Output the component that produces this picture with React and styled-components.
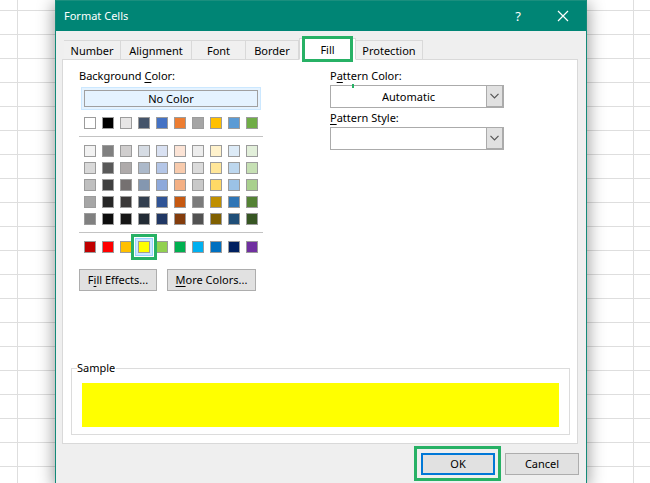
import React, { useState } from 'react';
import styled, { createGlobalStyle } from 'styled-components';

const GlobalStyle = createGlobalStyle`
  * {
    box-sizing: border-box;
  }
  body {
    margin: 0;
    overflow: hidden;
    font-family: 'Noto Sans', 'Open Sans', sans-serif;
    font-size: 11px;
    line-height: 16px;
    color: #000;
  }
  button, select {
    font: inherit;
    color: inherit;
    border-radius: 0;
    margin: 0;
    padding: 0;
  }
  u {
    text-underline-offset: 2px;
  }
`;

const Sheet = styled.main`
  min-height: 100vh;
  padding: 0 63px 0 55px;
  background-color: #fff;
  background-image:
    linear-gradient(#dedede 1px, transparent 1px),
    linear-gradient(90deg, #dedede 1px, transparent 1px);
  background-size: 77px 24px;
  background-position: 17px 10px;
`;

const Dialog = styled.section`
  min-height: 100vh;
  border: solid #138a78;
  border-width: 0 1px;
  background: #efefef;
  box-shadow: 0 4px 16px 1px rgba(0, 0, 0, 0.4);
`;

const TitleBar = styled.header`
  display: flex;
  align-items: center;
  height: 31px;
  padding: 0 17px 0 8px;
  border-top: 1px solid #1a8f7e;
  background: #008575;
  color: #fff;
`;

const Title = styled.h1`
  flex: 1;
  margin: 0;
  font-size: 11px;
  font-weight: 400;
`;

const TitleButton = styled.button`
  display: flex;
  align-items: center;
  justify-content: center;
  width: 12px;
  height: 20px;
  margin-left: 33px;
  border: 0;
  background: none;
  font-size: 13px;
`;

const Tabs = styled.div`
  display: flex;
  align-items: flex-end;
  height: 29px;
  padding-left: 8px;
`;

const Tab = styled.button`
  position: relative;
  width: ${(props) => props.$width}px;
  height: ${(props) => (props.$active ? 22 : 20)}px;
  padding-top: 1px;
  border: 1px solid #d9d9d9;
  border-left-width: ${(props) => (props.$active ? 1 : 0)}px;
  border-bottom-color: ${(props) => (props.$active ? '#fff' : '#d9d9d9')};
  background: ${(props) => (props.$active ? '#fff' : '#f0f0f0')};

  &::after {
    content: '';
    display: ${(props) => (props.$active ? 'block' : 'none')};
    position: absolute;
    inset: -3px 2px;
    border: 3px solid #27b165;
  }
`;

const Panel = styled.div`
  display: flex;
  flex-direction: column;
  height: 385px;
  margin: -1px 8px 0 6px;
  padding: 8px 7px 8px 8px;
  border: 1px solid #d9d9d9;
  background: #fff;
`;

const Columns = styled.div`
  display: flex;
  flex: 1;
  gap: 67px;
  padding-left: 8px;
`;

const ColorColumn = styled.div`
  width: 184px;
`;

const PatternColumn = styled.div`
  width: 174px;
`;

const Label = styled.label`
  display: block;
`;

const Highlight = styled.div`
  margin: 3px 2px 7px;
  padding: 2px;
  border: 1px solid #cce8ff;
  background: #e5f3ff;
`;

const NoColorButton = styled.button`
  display: block;
  width: 100%;
  height: 17px;
  border: 1px solid #a0a0a0;
  background: #e5f3ff;
  line-height: 15px;
`;

const SwatchGrid = styled.div`
  display: grid;
  grid-template-columns: repeat(10, 12px);
  gap: 5px 6px;
  padding: 0 5px;
`;

const Swatch = styled.button`
  height: 12px;
  border: 1px solid #9c9c9c;
  background: ${(props) => props.$color};
  ${(props) =>
    props.$selected &&
    `
    z-index: 1;
    box-shadow: 0 0 0 2px #cce8ff, 0 0 0 3px #99d1ff, 0 0 0 4px #fff, 0 0 0 7px #27b165;
  `}
`;

const Divider = styled.hr`
  margin: 7px 0 8px;
  border: 0;
  border-top: 1px solid #c3c3c3;
`;

const ButtonRow = styled.div`
  display: flex;
  gap: 10px;
  margin-top: 16px;
`;

const PushButton = styled.button`
  width: ${(props) => props.$width}px;
  height: 22px;
  border: ${(props) => (props.$primary ? '2px solid #0078d7' : '1px solid #adadad')};
  background: #e1e1e1;
`;

const Combo = styled.div`
  position: relative;
  display: flex;
  height: 23px;
  margin: 1px 0 2px;
  border: 1px solid #ababab;
  border-right-width: 2px;
`;

const Select = styled.select`
  appearance: none;
  flex: 1;
  min-width: 0;
  padding-left: 51px;
  border: 0;
  background: #fff;
`;

const ComboArrow = styled.span`
  display: flex;
  align-items: center;
  justify-content: center;
  width: 16px;
  border: 1px solid #ababab;
  border-width: 0 0 1px 1px;
  background: #e1e1e1;
  pointer-events: none;
`;

const Tick = styled.span`
  position: absolute;
  top: -2px;
  left: 21px;
  width: 2px;
  height: 4px;
  background: #27b165;
`;

const Sample = styled.fieldset`
  min-width: 0;
  margin: 0;
  padding: 7px 10px 7px;
  border: 1px solid #dcdcdc;
`;

const SampleTitle = styled.legend`
  margin-left: -5px;
  padding: 0 1px 0 0;
`;

const SampleFill = styled.div`
  height: 44px;
  background: ${(props) => props.$color};
`;

const Footer = styled.footer`
  display: flex;
  align-items: center;
  justify-content: flex-end;
  gap: 4px;
  padding: 2px 7px 2px 0;
`;

const Marked = styled.div`
  padding: 4px 3px 3px 4px;
  border: 3px solid #27b165;
`;

const themeColors = [
  '#ffffff', '#000000', '#e7e6e6', '#44546a', '#4472c4', '#ed7d31', '#a5a5a5', '#ffc000', '#5b9bd5', '#70ad47',
];

const shadeColors = [
  '#f2f2f2', '#808080', '#d0cece', '#d6dce4', '#d9e1f2', '#fce4d6', '#ededed', '#fff2cc', '#ddebf7', '#e2efda',
  '#d9d9d9', '#595959', '#aeaaaa', '#acb9ca', '#b4c6e7', '#f8cbad', '#dbdbdb', '#ffe699', '#bdd7ee', '#c6e0b4',
  '#bfbfbf', '#404040', '#757171', '#8497b0', '#8ea9db', '#f4b084', '#c9c9c9', '#ffd966', '#9bc2e6', '#a9d08e',
  '#a6a6a6', '#262626', '#3a3838', '#333f4f', '#305496', '#c65911', '#7b7b7b', '#bf8f00', '#2f75b5', '#548235',
  '#808080', '#0d0d0d', '#161616', '#222b35', '#203764', '#833c0c', '#525252', '#806000', '#1f4e78', '#375623',
];

const standardColors = [
  '#c00000', '#ff0000', '#ffc000', '#ffff00', '#92d050', '#00b050', '#00b0f0', '#0070c0', '#002060', '#7030a0',
];

const tabs = [
  { name: 'Number', width: 57 },
  { name: 'Alignment', width: 71 },
  { name: 'Font', width: 54 },
  { name: 'Border', width: 53 },
  { name: 'Fill', width: 57 },
  { name: 'Protection', width: 67 },
];

function Swatches({ colors, selected, onPick }) {
  return (
    <SwatchGrid>
      {colors.map((color, i) => (
        <Swatch
          key={i}
          type="button"
          aria-label={color}
          $color={color}
          $selected={color === selected}
          onClick={() => onPick(color)}
        />
      ))}
    </SwatchGrid>
  );
}

function Arrow() {
  return (
    <ComboArrow>
      <svg width="9" height="6" viewBox="0 0 9 6" fill="none" stroke="#555" strokeWidth="1.2">
        <path d="M0.5 0.8 L4.5 4.8 L8.5 0.8" />
      </svg>
    </ComboArrow>
  );
}

function App() {
  const [fill, setFill] = useState('#ffff00');
  const [tab, setTab] = useState('Fill');

  return (
    <Sheet>
      <GlobalStyle />
      <Dialog role="dialog" aria-labelledby="title">
        <TitleBar>
          <Title id="title">Format Cells</Title>
          <TitleButton type="button">?</TitleButton>
          <TitleButton type="button" aria-label="Close">
            <svg width="12" height="12" viewBox="0 0 12 12" stroke="#fff" strokeWidth="1.2">
              <path d="M1 1 L11 11 M11 1 L1 11" />
            </svg>
          </TitleButton>
        </TitleBar>
        <Tabs role="tablist">
          {tabs.map(({ name, width }) => (
            <Tab
              key={name}
              type="button"
              role="tab"
              aria-selected={tab === name}
              $width={width}
              $active={tab === name}
              onClick={() => setTab(name)}
            >
              {name}
            </Tab>
          ))}
        </Tabs>
        <Panel>
          <Columns>
            <ColorColumn>
              <Label htmlFor="no-color">Background <u>C</u>olor:</Label>
              <Highlight>
                <NoColorButton id="no-color" type="button" onClick={() => setFill('#ffffff')}>No Color</NoColorButton>
              </Highlight>
              <Swatches colors={themeColors} selected={fill} onPick={setFill} />
              <Divider />
              <Swatches colors={shadeColors} selected={fill} onPick={setFill} />
              <Divider />
              <Swatches colors={standardColors} selected={fill} onPick={setFill} />
              <ButtonRow>
                <PushButton type="button" $width={78}>F<u>i</u>ll Effects...</PushButton>
                <PushButton type="button" $width={89}><u>M</u>ore Colors...</PushButton>
              </ButtonRow>
            </ColorColumn>
            <PatternColumn>
              <Label htmlFor="pattern-color">P<u>a</u>ttern Color:</Label>
              <Combo>
                <Select id="pattern-color">
                  <option>Automatic</option>
                </Select>
                <Arrow />
                <Tick />
              </Combo>
              <Label htmlFor="pattern-style"><u>P</u>attern Style:</Label>
              <Combo>
                <Select id="pattern-style">
                  <option></option>
                </Select>
                <Arrow />
              </Combo>
            </PatternColumn>
          </Columns>
          <Sample>
            <SampleTitle>Sample</SampleTitle>
            <SampleFill $color={fill} />
          </Sample>
        </Panel>
        <Footer>
          <Marked>
            <PushButton type="button" $width={74} $primary>OK</PushButton>
          </Marked>
          <PushButton type="button" $width={74}>Cancel</PushButton>
        </Footer>
      </Dialog>
    </Sheet>
  );
}

export default App;
